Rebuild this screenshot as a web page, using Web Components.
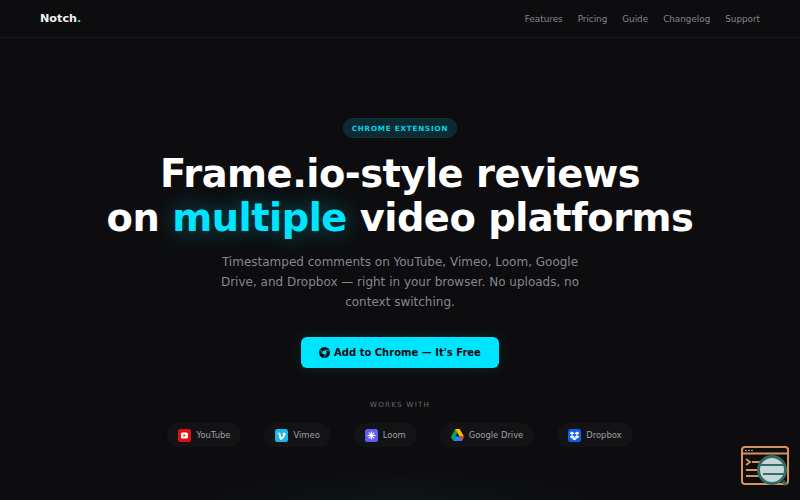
<!DOCTYPE html>
<html><head><meta charset="utf-8">
<style>
html,body{margin:0;height:100%;background:#0d0d0f;overflow:hidden}
body{font-family:"DejaVu Sans",sans-serif;color:#fff}
</style></head><body>
<template id="t-nav"><style>
:host{display:flex;align-items:center;justify-content:space-between;height:37px;padding:0 40px;border-bottom:1px solid #1a1b1d;font-family:"DejaVu Sans",sans-serif}
.logo{font-size:11.2px;font-weight:700;color:#f2f2f2}
.logo i{font-style:normal;color:#00e5ff}
nav{display:flex;gap:15px;font-size:8.8px;color:#85858d}
</style><div class="logo">Notch<i>.</i></div><nav><span>Features</span><span>Pricing</span><span>Guide</span><span>Changelog</span><span>Support</span></nav></template>

<template id="t-hero"><style>
:host{display:flex;flex-direction:column;align-items:center;box-sizing:border-box;height:462px;padding-top:80px;font-family:"DejaVu Sans",sans-serif;background:radial-gradient(ellipse 200px 28px at 50% 100%,rgba(0,229,255,.035),transparent)}
.badge{height:20px;box-sizing:border-box;display:flex;align-items:center;padding:0 8px;border-radius:10px;background:#0c2a30;border:1px solid #0d343b;font-size:7.2px;font-weight:700;letter-spacing:.8px;color:#00d4ec}
h1{margin:14px 0 0;font-size:38.4px;line-height:44px;font-weight:700;text-align:center;color:#fff;letter-spacing:-.5px}
h1 em{font-style:normal;color:#00e5ff;text-shadow:0 0 24px rgba(0,229,255,.4)}
p{margin:12px 0 0;width:360px;font-size:12px;line-height:20px;text-align:center;color:#86868e}
.cta{margin-top:25px;height:31px;width:198px;box-sizing:border-box;display:flex;align-items:center;justify-content:center;gap:4px;background:#00e5ff;border-radius:6px;color:#0d0d0f;font-size:10px;font-weight:700;box-shadow:0 0 14px rgba(0,229,255,.12)}
.works{margin-top:32px;font-size:7.2px;letter-spacing:1.2px;color:#66666e}
.row{display:flex;gap:23px;margin-top:14px}
</style><div class="badge">CHROME EXTENSION</div><h1>Frame.io-style reviews<br>on <em>multiple</em> video platforms</h1>
<p>Timestamped comments on YouTube, Vimeo, Loom, Google Drive, and Dropbox — right in your browser. No uploads, no context switching.</p>
<div class="cta"><svg width="11" height="11" viewBox="0 0 24 24"><circle cx="12" cy="12" r="12" fill="#0d0d0f"/><circle cx="12" cy="12" r="4.5" fill="#00e5ff"/><path d="M12 7.500h10M8 14.500 3 5.500M16 14.500 11 23.500" stroke="#00e5ff" stroke-width="1.600"/></svg>Add to Chrome — It's Free</div>
<div class="works">WORKS WITH</div>
<div class="row"><slot></slot></div></template>

<template id="t-chip"><style>
:host{display:flex;align-items:center;gap:5px;height:24px;padding:0 11px;border-radius:12px;background:#131315;font-family:"DejaVu Sans",sans-serif;font-size:8.4px;color:#a0a0a8}
</style><slot name="icon"></slot><slot></slot></template>

<template id="t-fab"><style>
:host{position:fixed;right:9px;bottom:8px;width:50px;height:46px;display:block}
</style><svg width="50" height="46" viewBox="0 0 50 46" fill="none">
<rect x="1" y="1" width="46" height="37" rx="3" fill="#0d0d0f" stroke="#d9935a" stroke-width="2"/><path d="M1 7.500h46" stroke="#d9935a" stroke-width="2"/>
<circle cx="5" cy="4.500" r=".8" fill="#d9b08f"/><circle cx="8" cy="4.500" r=".8" fill="#d9b08f"/><circle cx="11" cy="4.500" r=".8" fill="#d9b08f"/>
<path d="M5 13l4 3-4 3M11 16h14M5 24h20M5 30h20" stroke="#d9935a" stroke-width="2"/>
<circle cx="31" cy="24" r="13.500" fill="#c9d6d6" stroke="#2f6d68" stroke-width="3"/><path d="M18 19h26M22 28h22" stroke="#2f6d68" stroke-width="2"/><path d="M42 35l3 4" stroke="#2f6d68" stroke-width="3"/></svg></template>

<site-nav></site-nav>
<hero-section>
<logo-chip><svg slot="icon" width="13" height="13" viewBox="0 0 13 13"><rect width="13" height="13" rx="2.500" fill="#e01010"/><rect x="3" y="3.500" width="7" height="6" rx="1.500" fill="#fff"/><path d="M5.500 5l2.200 1.500-2.200 1.500z" fill="#e01010"/></svg>YouTube</logo-chip>
<logo-chip><svg slot="icon" width="13" height="13" viewBox="0 0 13 13"><rect width="13" height="13" rx="2.500" fill="#1ab7ea"/><path d="M2.500 4.500C4 3 5 3 5.300 4.500l.8 3.500c.5 1 1.500-.5 2.200-2 .4-1-1-.8-1-.8.5-2 3.700-2 3.200.3-.5 2-3 5-4.500 5.500-1.500.3-1.800-4-2.500-5.500L3 5z" fill="#fff"/></svg>Vimeo</logo-chip>
<logo-chip><svg slot="icon" width="13" height="13" viewBox="0 0 13 13"><rect width="13" height="13" rx="2.500" fill="#625df5"/><path d="M6.500 2.500v8M2.500 6.500h8M3.700 3.700l5.600 5.600M9.300 3.700l-5.600 5.600" stroke="#fff" stroke-width="1.100"/><circle cx="6.500" cy="6.500" r="1.600" fill="#fff"/></svg>Loom</logo-chip>
<logo-chip><svg slot="icon" width="13" height="12" viewBox="0 0 13 12"><path d="M4.300 0h4.400L4.400 7.500 2.200 12 0 8z" fill="#00ac47"/><path d="M4.300 0h4.400L13 7.500H8.600z" fill="#ffba00"/><path d="M2.200 12 4.400 7.500H13L10.800 12z" fill="#2684fc"/><path d="M8.600 7.500H13L10.800 12z" fill="#ea4335"/></svg>Google Drive</logo-chip>
<logo-chip><svg slot="icon" width="13" height="13" viewBox="0 0 13 13"><rect width="13" height="13" rx="2.500" fill="#0d5fe8"/><path d="M4 2.500 6.500 4.300 4 6 1.500 4.300zM9 2.500 11.500 4.300 9 6 6.500 4.300zM4 6l2.500 1.700L4 9.400 1.500 7.700zM9 6l2.500 1.700L9 9.400 6.500 7.700zM4 9.800l2.500-1.500L9 9.800 6.500 11.300z" fill="#fff"/></svg>Dropbox</logo-chip>
</hero-section>
<corner-mark></corner-mark>
<script>
function def(tag,id){customElements.define(tag,class extends HTMLElement{constructor(){super();this.attachShadow({mode:"open"}).appendChild(document.getElementById(id).content.cloneNode(true))}})}
def("site-nav","t-nav");def("hero-section","t-hero");def("logo-chip","t-chip");def("corner-mark","t-fab");
</script>
</body></html>
